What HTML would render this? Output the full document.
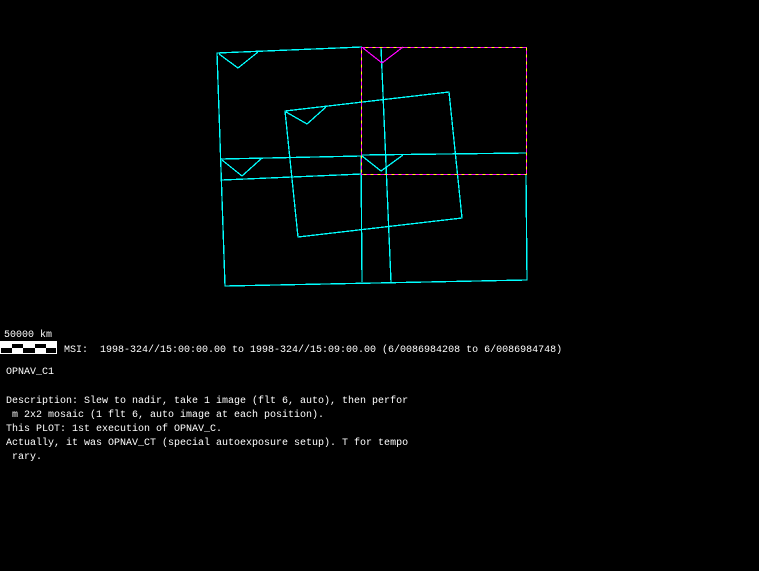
<!DOCTYPE html>
<html><head><style>
html,body{margin:0;padding:0;background:#000;}
body{width:759px;height:571px;position:relative;overflow:hidden;}
.t{position:absolute;font-family:"Liberation Mono",monospace;font-size:10px;color:#fff;white-space:pre;line-height:14px;}
</style></head><body>
<svg width="759" height="571" style="position:absolute;left:0;top:0" shape-rendering="crispEdges">
<g fill="none" stroke="#00ffff" stroke-width="1.3">
<polyline points="362,47 217,53 225,286 527,280 526,174"/>
<line x1="221" y1="159" x2="362" y2="156"/>
<line x1="222" y1="180" x2="362" y2="174"/>
<line x1="362" y1="155" x2="527" y2="153"/>
<line x1="381" y1="47" x2="391" y2="282"/>
<line x1="361" y1="156" x2="362" y2="282"/>
<polygon points="285,111 449,92 462,218 298,237"/>
<polyline points="219,54 238,68 258,52"/>
<polyline points="286,112 307,124 326,107"/>
<polyline points="222,160 242,176 262,158"/>
<polyline points="362,156 381,171 403,155"/>
</g>
<g fill="none" stroke-width="1.2">
<rect x="361.5" y="47.5" width="165" height="127" stroke="#ffff00"/>
<rect x="361.5" y="47.5" width="165" height="127" stroke="#ff00ff" stroke-dasharray="4,3"/>
<polyline points="363,48 382,63 403,47" stroke="#ff00ff"/>
</g>
<line x1="0" y1="341.5" x2="57" y2="341.5" stroke="#fff"/>
<rect x="0" y="342" width="57" height="12" fill="#fff"/>
<g fill="#000">
<rect x="12" y="344" width="11" height="4"/><rect x="35" y="344" width="11" height="4"/>
<rect x="1" y="348" width="11" height="5"/><rect x="23" y="348" width="12" height="5"/><rect x="46" y="348" width="10" height="5"/>
</g>
</svg>
<div class="t" style="left:4px;top:329px">50000 km</div>
<div class="t" style="left:64px;top:344px">MSI:  1998-324//15:00:00.00 to 1998-324//15:09:00.00 (6/0086984208 to 6/0086984748)</div>
<div class="t" style="left:6px;top:366px">OPNAV_C1</div>
<div class="t" style="left:6px;top:395px">Description: Slew to nadir, take 1 image (flt 6, auto), then perfor
 m 2x2 mosaic (1 flt 6, auto image at each position).
This PLOT: 1st execution of OPNAV_C.
Actually, it was OPNAV_CT (special autoexposure setup). T for tempo
 rary.</div>
</body></html>
